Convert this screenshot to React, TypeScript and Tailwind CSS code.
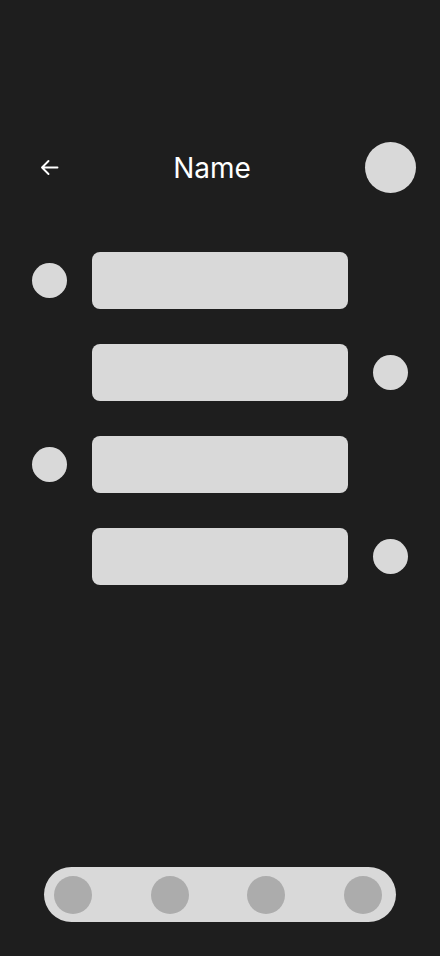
import React from "react";

const Dot = () => <div className="w-[35px] h-[35px] rounded-full bg-[#d9d9d9]" />;

export default function App() {
  const rows = [true, false, true, false];
  return (
    <div className="w-full h-[956px] bg-[#1e1e1e] flex flex-col" style={{ fontFamily: "Inter, 'Noto Sans', sans-serif" }}>
      <div className="mt-[142px] h-[51px] flex items-center justify-between pl-[40px] pr-[24px]">
        <svg width="19" height="17" viewBox="0 0 19 17" fill="none" className="shrink-0">
          <path d="M17.5 8.5H2M8.5 2L2 8.5L8.5 15" stroke="#ffffff" strokeWidth="1.9" strokeLinecap="round" strokeLinejoin="round" />
        </svg>
        <div className="text-[28px] leading-none text-white">Name</div>
        <div className="w-[51px] h-[51px] rounded-full bg-[#d9d9d9]" />
      </div>
      <div className="mt-[59px] flex flex-col gap-[35px]">
        {rows.map((left, i) => (
          <div key={i} className="flex items-center pl-[32px] gap-[25px]">
            <div className="w-[35px] h-[35px]">{left && <Dot />}</div>
            <div className="w-[256px] h-[57px] rounded-[8px] bg-[#d9d9d9]" />
            <div className="w-[35px] h-[35px]">{!left && <Dot />}</div>
          </div>
        ))}
      </div>
      <div className="mt-auto mb-[34px] ml-[44px] w-[352px] h-[55px] rounded-full bg-[#d9d9d9] flex items-center pl-[10px] gap-[58.6px]">
        {[0, 1, 2, 3].map((i) => (
          <div key={i} className="w-[38px] h-[38px] rounded-full bg-[#acacac]" />
        ))}
      </div>
    </div>
  );
}
